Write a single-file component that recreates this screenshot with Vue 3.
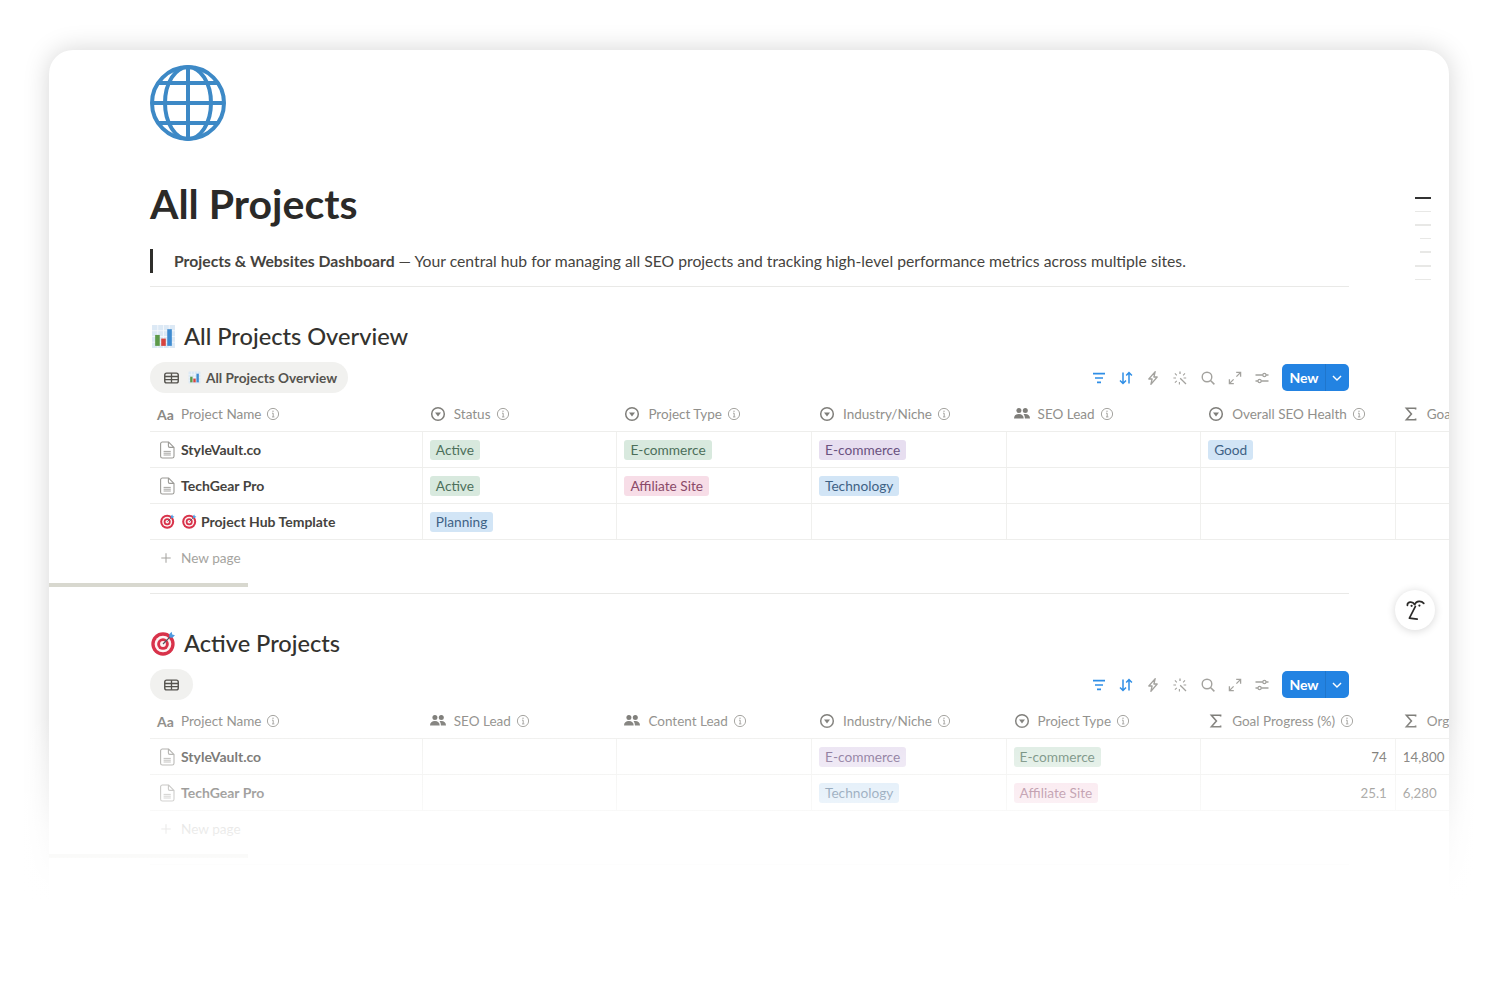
<script setup>
const columnsA = [
  { icon: 'text', label: 'Project Name' },
  { icon: 'select', label: 'Status' },
  { icon: 'select', label: 'Project Type' },
  { icon: 'select', label: 'Industry/Niche' },
  { icon: 'people', label: 'SEO Lead' },
  { icon: 'select', label: 'Overall SEO Health' },
  { icon: 'sigma', label: 'Goal Progress (%)' }
]
const columnsB = [
  { icon: 'text', label: 'Project Name' },
  { icon: 'people', label: 'SEO Lead' },
  { icon: 'people', label: 'Content Lead' },
  { icon: 'select', label: 'Industry/Niche' },
  { icon: 'select', label: 'Project Type' },
  { icon: 'sigma', label: 'Goal Progress (%)' },
  { icon: 'sigma', label: 'Organic Traffic' }
]
const g = t => ({ tag: t, tone: 'green' })
const p = t => ({ tag: t, tone: 'pink' })
const v = t => ({ tag: t, tone: 'purple' })
const b = t => ({ tag: t, tone: 'blue' })
const e = {}
const sections = [
  {
    title: 'All Projects Overview', emoji: 'chart', view: 'All Projects Overview', columns: columnsA,
    rows: [
      { name: 'StyleVault.co', icon: 'doc', cells: [g('Active'), g('E-commerce'), v('E-commerce'), e, b('Good'), e] },
      { name: 'TechGear Pro', icon: 'doc', cells: [g('Active'), p('Affiliate Site'), b('Technology'), e, e, e] },
      { name: 'Project Hub Template', icon: 'target', prefix: true, cells: [b('Planning'), e, e, e, e, e] }
    ]
  },
  {
    title: 'Active Projects', emoji: 'target', view: '', columns: columnsB,
    rows: [
      { name: 'StyleVault.co', icon: 'doc', cells: [e, e, v('E-commerce'), g('E-commerce'), { num: '74' }, { text: '14,800' }] },
      { name: 'TechGear Pro', icon: 'doc', cells: [e, e, b('Technology'), p('Affiliate Site'), { num: '25.1' }, { text: '6,280' }] }
    ]
  }
]
const tools = [
  { id: 'filter', on: true }, { id: 'sort', on: true }, { id: 'bolt' }, { id: 'wand' },
  { id: 'search' }, { id: 'expand' }, { id: 'sliders' }
]
const toc = [true, false, false, false, false, false, false]
const tocIndent = [false, false, false, true, true, false, false]
</script>

<template>
  <div class="page">
    <svg class="sprite" aria-hidden="true">
      <symbol id="i-select" viewBox="0 0 16 16">
        <circle cx="8" cy="8" r="6.3" fill="none" stroke="currentColor" stroke-width="1.5" />
        <path d="M5 6.4h6L8 10.6z" fill="currentColor" />
      </symbol>
      <symbol id="i-people" viewBox="0 0 16 16">
        <circle cx="4.9" cy="4.6" r="2.5" fill="currentColor" />
        <circle cx="11.3" cy="4.6" r="2.5" fill="currentColor" />
        <path d="M0 12.4c0-3 2-4.5 4.9-4.5s4.8 1.5 4.8 4.5zM10.9 12.4c0-1.8-.5-3.3-1.4-4.2.6-.2 1.2-.3 1.8-.3 2.8 0 4.7 1.5 4.7 4.5z" fill="currentColor" />
      </symbol>
      <symbol id="i-sigma" viewBox="0 0 16 16">
        <path d="M12.6 3.6V2.2H3.4L8.4 8l-5 5.8h9.2v-1.4" fill="none" stroke="currentColor" stroke-width="1.6" />
      </symbol>
      <symbol id="i-info" viewBox="0 0 14 14">
        <circle cx="7" cy="7" r="5.6" fill="none" stroke="currentColor" stroke-width="1" />
        <path d="M6 6.2h1.2v3.6M6 9.9h2.4" fill="none" stroke="currentColor" stroke-width="1" />
        <circle cx="7" cy="4.2" r=".7" fill="currentColor" />
      </symbol>
      <symbol id="i-doc" viewBox="0 0 16 18">
        <path d="M3.4 1h6.2L15 6.4v8.8a1.8 1.8 0 0 1-1.8 1.8H3.4a1.8 1.8 0 0 1-1.8-1.8V2.8A1.8 1.8 0 0 1 3.4 1zM9.4 1.2v3.9a1.3 1.3 0 0 0 1.3 1.3h4.1" fill="none" stroke="currentColor" stroke-width="1.1" />
        <path d="M4.6 10.4h7.2M4.6 12.2h7.2M4.6 14h7.2" stroke="currentColor" stroke-width=".9" />
      </symbol>
      <symbol id="i-table" viewBox="0 0 16 12">
        <rect x=".8" y=".8" width="14.4" height="10.4" rx="2" fill="none" stroke="currentColor" stroke-width="1.5" />
        <path d="M1 4.4h14M1 7.8h14M8 1v10" stroke="currentColor" stroke-width="1.4" />
      </symbol>
      <symbol id="i-chart" viewBox="0 0 24 24">
        <rect x="1" y="1" width="22" height="22" fill="#dce9f5" />
        <path d="M1 6.5h22M1 12h22M1 17.5h22M6.5 1v22M12 1v22M17.5 1v22" stroke="#f4f8fc" stroke-width=".9" />
        <rect x="4" y="10.5" width="4.4" height="10.5" fill="#5d9a4a" />
        <rect x="9.8" y="14" width="4.4" height="7" fill="#d6443f" />
        <rect x="15.6" y="5" width="4.4" height="16" fill="#3f8bd0" />
      </symbol>
      <symbol id="i-target" viewBox="0 0 24 24">
        <circle cx="11.5" cy="12.5" r="11.2" fill="#d8324a" />
        <circle cx="11.5" cy="12.5" r="8" fill="#fdf3f3" />
        <circle cx="11.5" cy="12.5" r="5.6" fill="#d8324a" />
        <circle cx="11.5" cy="12.5" r="2.8" fill="#fdf3f3" />
        <path d="M11.5 12.5 19 5" stroke="#4a5560" stroke-width="1.1" />
        <path d="M17.4 3.2 19.8.8l.6 2.6 2.6.6-2.4 2.4-2.8-.2z" fill="#4f9be0" />
      </symbol>
      <symbol id="i-filter" viewBox="0 0 16 16">
        <path d="M2 3.6h12M4 8h8M6 12.4h4" fill="none" stroke="currentColor" stroke-width="1.7" />
      </symbol>
      <symbol id="i-sort" viewBox="0 0 16 16">
        <path d="M5 2.5v11M2 10.4l3 3.1 3-3.1M11 13.5v-11M8.2 5.6 11 2.5l2.9 3.1" fill="none" stroke="currentColor" stroke-width="1.5" />
      </symbol>
      <symbol id="i-bolt" viewBox="0 0 16 16">
        <path d="M10.2 1.6 3.8 9h3.3l-1.2 5.4L12.2 7H8.9z" fill="none" stroke="currentColor" stroke-width="1.3" stroke-linejoin="round" />
      </symbol>
      <symbol id="i-wand" viewBox="0 0 16 16">
        <path d="M8.2 8.2l5.8 5.8M8 1.5v2.6" fill="none" stroke="currentColor" stroke-width="1.3" />
        <path d="M2.9 3.4 4.8 5.3M13 3.4 11.1 5.3M1.4 8h2.6M11.6 8h2.6M2.9 12.7l1.9-1.9M7.4 12v2.4" fill="none" stroke="currentColor" stroke-width="1.1" />
      </symbol>
      <symbol id="i-search" viewBox="0 0 16 16">
        <circle cx="7" cy="7" r="4.8" fill="none" stroke="currentColor" stroke-width="1.4" />
        <path d="M10.5 10.5 14.4 14.4" stroke="currentColor" stroke-width="1.5" />
      </symbol>
      <symbol id="i-expand" viewBox="0 0 16 16">
        <path d="M9.2 2.4h4.4v4.4M13.4 2.6 9.4 6.6M6.8 13.6H2.4V9.2M2.6 13.4l4-4" fill="none" stroke="currentColor" stroke-width="1.3" />
      </symbol>
      <symbol id="i-sliders" viewBox="0 0 16 16">
        <path d="M1.5 5h7.4M12 5h2.5M1.5 11H4M7.1 11h7.4" stroke="currentColor" stroke-width="1.3" />
        <circle cx="10.4" cy="5" r="1.6" fill="none" stroke="currentColor" stroke-width="1.2" />
        <circle cx="5.6" cy="11" r="1.6" fill="none" stroke="currentColor" stroke-width="1.2" />
      </symbol>
      <symbol id="i-chevron" viewBox="0 0 16 16">
        <path d="M3.4 5.8 8 10.4l4.6-4.6" fill="none" stroke="currentColor" stroke-width="1.6" />
      </symbol>
      <symbol id="i-plus" viewBox="0 0 16 16">
        <path d="M8 2.6v10.8M2.6 8h10.8" stroke="currentColor" stroke-width="1.2" />
      </symbol>
      <symbol id="i-face" viewBox="0 0 24 24">
        <path d="M4.4 7.4C4 4 9.4 2.4 11.6 6.6 13.4 2.6 18.4 2.6 20.8 5.4M12.4 8.4 6.4 20.2l7.8 1" fill="none" stroke="currentColor" stroke-width="1.7" stroke-linecap="round" stroke-linejoin="round" />
        <circle cx="8.6" cy="7.8" r="1.1" fill="currentColor" />
        <circle cx="16.4" cy="7.6" r="1.1" fill="currentColor" />
      </symbol>
    </svg>

    <main class="card">
      <svg class="globe" viewBox="0 0 76 76" aria-hidden="true">
        <g fill="none" stroke="#3d89c6" stroke-width="4">
          <circle cx="38" cy="38" r="36" />
          <ellipse cx="38" cy="38" rx="23" ry="36" />
          <path d="M38 2v72M2 38h72M8 18h60M8 58h60" />
        </g>
      </svg>

      <h1 class="title">All Projects</h1>

      <p class="callout"><strong>Projects &amp; Websites Dashboard</strong> — Your central hub for managing all SEO projects and tracking high-level performance metrics across multiple sites.</p>
      <hr class="rule" />

      <section v-for="s in sections" :key="s.title" class="section">
        <h2 class="heading">
          <svg class="heading-icon"><use :href="'#i-' + s.emoji" /></svg>
          {{ s.title }}
        </h2>

        <div class="bar">
          <div class="pill">
            <svg class="pill-table"><use href="#i-table" /></svg>
            <template v-if="s.view">
              <svg class="pill-emoji"><use href="#i-chart" /></svg>
              <span>{{ s.view }}</span>
            </template>
          </div>
          <div class="tools">
            <svg v-for="t in tools" :key="t.id" class="tool" :class="{ on: t.on }"><use :href="'#i-' + t.id" /></svg>
            <div class="new">
              <span class="new-label">New</span>
              <span class="new-arrow"><svg class="chev"><use href="#i-chevron" /></svg></span>
            </div>
          </div>
        </div>

        <div class="table">
          <div class="row head">
            <div v-for="c in s.columns" :key="c.label" class="th">
              <span v-if="c.icon === 'text'" class="aa">Aa</span>
              <svg v-else class="th-icon"><use :href="'#i-' + c.icon" /></svg>
              <span class="th-label">{{ c.label }}</span>
              <svg class="info"><use href="#i-info" /></svg>
            </div>
          </div>
          <div v-for="r in s.rows" :key="r.name" class="row">
            <div class="td name">
              <svg class="row-icon" :class="{ target: r.icon === 'target' }"><use :href="'#i-' + r.icon" /></svg>
              <svg v-if="r.prefix" class="row-icon target second"><use href="#i-target" /></svg>
              <span>{{ r.name }}</span>
            </div>
            <div v-for="(c, i) in r.cells" :key="i" class="td cell" :class="{ right: c.num }">
              <span v-if="c.tag" class="tag" :class="c.tone">{{ c.tag }}</span>
              <span v-else-if="c.num">{{ c.num }}</span>
              <span v-else-if="c.text">{{ c.text }}</span>
            </div>
          </div>
          <div class="add">
            <svg class="plus"><use href="#i-plus" /></svg>
            <span>New page</span>
          </div>
        </div>

        <div class="scroll"></div>
        <hr class="rule" />
      </section>

      <nav class="toc">
        <i v-for="(d, i) in toc" :key="i" :class="{ dark: d, indent: tocIndent[i] }"></i>
      </nav>

      <div class="fab"><svg class="face"><use href="#i-face" /></svg></div>
    </main>

    <div class="fade"></div>
  </div>
</template>

<style>
html, body { margin: 0; background: #fff; }
</style>

<style scoped>
.page {
  position: relative;
  height: 1000px;
  overflow: hidden;
  padding: 50px 51px 0 49px;
  box-sizing: border-box;
  font-family: Lato, "Open Sans", sans-serif;
  color: #37352f;
  background: #fff;
}
.sprite { position: absolute; width: 0; height: 0; }
.card {
  position: relative;
  height: 1000px;
  padding: 15px 0 0 101px;
  box-sizing: border-box;
  background: #fff;
  border-radius: 24px 24px 0 0;
  box-shadow: 0 0 26px rgba(0, 0, 0, .17);
  overflow: hidden;
}
.globe { display: block; width: 76px; height: 76px; }
.title {
  margin: 39px 0 0;
  font-size: 41px;
  line-height: 48px;
  font-weight: 700;
  color: #2b2a28;
}
.callout {
  width: 1199px;
  box-sizing: border-box;
  margin: 21px 0 13px;
  border-left: 3px solid #2f2e2b;
  padding-left: 21px;
  font-size: 15.73px;
  line-height: 24px;
  color: #45433e;
}
.callout strong { font-weight: 700; color: #45433e; }
.rule {
  width: 1199px;
  height: 1px;
  margin: 0;
  border: 0;
  background: #e9e9e7;
}
.section { padding-top: 33px; }
.heading {
  display: flex;
  align-items: center;
  gap: 8px;
  width: 1199px;
  margin: 0 0 10px;
  font-size: 23.6px;
  line-height: 32px;
  font-weight: 500;
  color: #33322e;
}
.heading-icon { width: 25px; height: 25px; margin-left: 1px; }
.bar {
  display: flex;
  justify-content: space-between;
  align-items: center;
  width: 1199px;
  height: 31px;
  margin-bottom: 4px;
}
.pill {
  display: flex;
  align-items: center;
  height: 31px;
  padding: 0 14px;
  border-radius: 16px;
  background: #f1f1ef;
  font-size: 13.6px;
  font-weight: 700;
  color: #55534e;
}
.pill span { margin-right: -3px; }
.pill-table { width: 15px; height: 12px; color: #55534e; }
.pill-emoji { width: 13px; height: 13px; margin: 0 5px 0 9px; }
.tools { display: flex; align-items: center; gap: 11.2px; }
.tool { width: 16px; height: 16px; color: #a3a29e; }
.tool.on { color: #2f8ee6; }
.new {
  display: flex;
  width: 67px;
  height: 27px;
  margin-left: .8px;
  border-radius: 5px;
  background: #2383e2;
  color: #fff;
  font-size: 14px;
  font-weight: 700;
}
.new-label { width: 43px; text-align: center; line-height: 28px; box-sizing: border-box; padding-left: 1px; }
.new-arrow {
  flex: 1;
  display: flex;
  align-items: center;
  justify-content: center;
  padding-right: 1px;
  border-left: 1px solid #1f76cc;
}
.chev { width: 14px; height: 14px; }
.table { overflow: hidden; }
.row {
  display: grid;
  grid-template-columns: 271.8px repeat(6, 194.6px);
  height: 36px;
  box-sizing: border-box;
  border-bottom: 1px solid #eeeeec;
}
.head { height: 35px; }
.th {
  display: flex;
  align-items: center;
  padding-left: 8px;
  white-space: nowrap;
  overflow: hidden;
  font-size: 13.5px;
  color: #91908c;
}
.aa { width: 16px; margin: 0 8px 0 -1px; font-weight: 700; font-size: 14px; color: #8a8985; }
.th-icon { flex: none; width: 16px; height: 16px; margin-right: 8px; color: #7f7e7a; }
.th-label { flex: none; }
.info { flex: none; width: 14px; height: 14px; margin-left: 5px; color: #a5a4a0; }
.td {
  display: flex;
  align-items: center;
  box-sizing: border-box;
  min-width: 0;
  font-size: 14px;
  white-space: nowrap;
}
.name { padding-left: 9px; font-weight: 700; color: #45433e; }
.row-icon { flex: none; width: 16px; height: 18px; margin-right: 6px; color: #9b9a96; }
.row-icon.target { width: 15px; height: 15px; margin: 0 7px 0 1px; }
.row-icon.second { margin: 0 4px 0 0; }
.cell { padding: 0 8px 0 7px; border-left: 1px solid #f0f0ee; color: #55534e; font-size: 13.3px; }
.cell.right { justify-content: flex-end; }
.tag {
  height: 20px;
  padding: 0 6px;
  border-radius: 3px;
  font-size: 13.7px;
  line-height: 20px;
}
.green { background: #d8e9de; color: #4c6f5a; }
.pink { background: #f7dde7; color: #8a4a68; }
.purple { background: #e7def0; color: #6a5280; }
.blue { background: #d2e5f6; color: #3f6285; }
.add {
  display: flex;
  align-items: center;
  height: 36px;
  padding-left: 9px;
  font-size: 13.6px;
  color: #a5a4a0;
}
.plus { width: 14px; height: 14px; margin-right: 8px; }
.scroll {
  width: 199px;
  height: 4px;
  margin: 7px 0 6px -101px;
  background: #d8d8cf;
}
.toc {
  position: absolute;
  top: 147px;
  right: 18px;
  display: flex;
  flex-direction: column;
  align-items: flex-end;
  gap: 12px;
}
.toc i { display: block; width: 16px; height: 1.6px; background: #e8e8e6; }
.toc i.dark { background: #333; }
.toc i.indent { width: 11px; }
.fab {
  position: absolute;
  top: 540px;
  right: 14px;
  display: flex;
  align-items: center;
  justify-content: center;
  width: 40px;
  height: 40px;
  border-radius: 50%;
  background: #fff;
  box-shadow: 0 1px 8px rgba(0, 0, 0, .16);
}
.face { width: 24px; height: 24px; color: #2b2a28; }
.fade {
  position: absolute;
  left: 0;
  right: 0;
  top: 715px;
  bottom: 0;
  pointer-events: none;
  background: linear-gradient(to bottom,
    rgba(255, 255, 255, 0) 0,
    rgba(255, 255, 255, .3) 42px,
    rgba(255, 255, 255, .5) 78px,
    rgba(255, 255, 255, .78) 115px,
    rgba(255, 255, 255, .88) 140px,
    rgba(255, 255, 255, .97) 165px,
    #fff 185px);
}
</style>
